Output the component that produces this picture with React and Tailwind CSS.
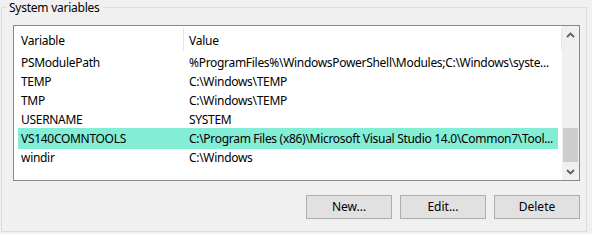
import React from 'react';

const rows = [
  { name: 'PSModulePath', value: '%ProgramFiles%\\WindowsPowerShell\\Modules;C:\\Windows\\syste...' },
  { name: 'TEMP', value: 'C:\\Windows\\TEMP' },
  { name: 'TMP', value: 'C:\\Windows\\TEMP' },
  { name: 'USERNAME', value: 'SYSTEM' },
  { name: 'VS140COMNTOOLS', value: 'C:\\Program Files (x86)\\Microsoft Visual Studio 14.0\\Common7\\Tool...', selected: true },
  { name: 'windir', value: 'C:\\Windows' },
];

const Chevron = ({ down }) => (
  <svg width="9" height="6" viewBox="0 0 9 6" className={down ? 'rotate-180' : ''}>
    <path d="M1 5 L4.5 1.5 L8 5" fill="none" stroke="#606060" strokeWidth="1.8" />
  </svg>
);

const Button = ({ children }) => (
  <button className="w-[86px] h-[24px] border border-[#adadad] bg-[#e1e1e1] text-[12px] text-black leading-none">
    {children}
  </button>
);

export default function App() {
  return (
    <div
      className="w-[592px] h-[234px] bg-[#f0f0f0] pt-[7px] pl-[1px] text-black"
      style={{ fontFamily: '"Segoe UI", "Noto Sans", sans-serif' }}
    >
      <div className="relative w-[586px] h-[225px] border border-[#dcdcdc] pt-[17px] pl-[11px]">
        <span className="absolute -top-[8px] left-[4px] px-[3px] bg-[#f0f0f0] text-[12px] leading-[16px] tracking-[-0.25px]">
          System variables
        </span>

        <div className="w-[567px]">
          <div className="flex h-[156px] border border-[#828790] bg-white">
            <div className="flex-1 flex flex-col">
              <div className="flex h-[27px] text-[12px] tracking-[-0.25px]">
                <div className="w-[169px] pl-[7px] pt-[6px]">Variable</div>
                <div className="w-px h-[23px] mt-[2px] bg-[#e5e5e5]"></div>
                <div className="flex-1 pl-[5px] pt-[6px]">Value</div>
                <div className="w-px h-[23px] mt-[2px] bg-[#e5e5e5]"></div>
              </div>
              {rows.map((r) => (
                <div
                  key={r.name}
                  className={`flex ml-[4px] w-[540px] text-[12px] tracking-[-0.3px] whitespace-nowrap overflow-hidden ${
                    r.selected ? 'bg-[#83edd6] h-[21px] -my-px pt-[2px] relative' : 'h-[19px] pt-px'
                  }`}
                >
                  <div className="w-[171px] pl-[3px]">{r.name}</div>
                  <div className="flex-1">{r.value}</div>
                </div>
              ))}
            </div>
            <div className="w-[17px] bg-[#f0f0f0] flex flex-col items-center">
              <div className="h-[17px] flex items-center justify-center">
                <Chevron />
              </div>
              <div className="flex-1 w-full flex flex-col pt-[85px] pb-[1px]">
                <div className="h-[34px] mx-px bg-[#cdcdcd]"></div>
              </div>
              <div className="h-[17px] flex items-center justify-center">
                <Chevron down />
              </div>
            </div>
          </div>

          <div className="flex justify-end gap-[8px] mt-[14px]">
            <Button>New...</Button>
            <Button>Edit...</Button>
            <Button>Delete</Button>
          </div>
        </div>
      </div>
    </div>
  );
}
